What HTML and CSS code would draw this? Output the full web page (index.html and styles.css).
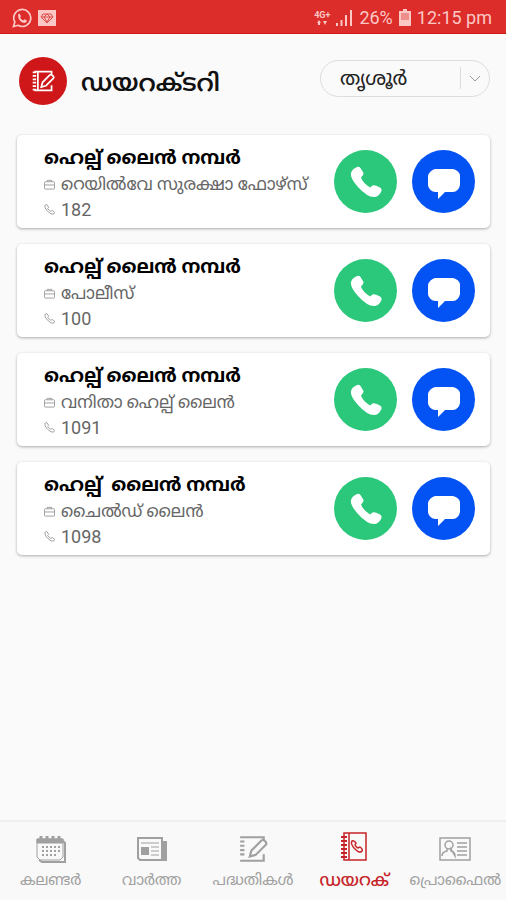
FILE: index.html
```html
<!DOCTYPE html>
<html lang="ml">
<head>
    <meta charset="UTF-8">
    <meta name="viewport" content="width=device-width, initial-scale=1.0">
    <title>ഡയറക്‌ടറി</title>
    <link rel="stylesheet" href="styles.css">
</head>
<body>
    <svg class="sprite" aria-hidden="true">
        <symbol id="phone" viewBox="0 0 32 32">
            <path d="M7 1Q9 0 10.500 2L13.500 7Q14 9 11 11.500Q12.500 16.500 20 21.500L22.500 19.500Q24.500 18.500 30 21.500Q32.500 23 31 26Q28.500 31 24 31Q17 31 8 21Q0 12 1 7Q2 3 7 1Z"/>
        </symbol>
        <symbol id="handset" viewBox="0 0 12 12">
            <path d="M1 1.500L3 .5L5 3.500L4 5Q5.500 7 7.500 8L9 7L11.500 9L10.500 11Q8 12 4 8Q0 4 1 1.500Z"/>
        </symbol>
        <symbol id="chat" viewBox="0 0 32 32">
            <path d="M7 1H25Q28 1.500 30 3.500T32 8V17Q31.500 20 29.500 22T25 24H17L10 31V24H7Q4 23.500 2 21.500T0 17V8Q.5 5.500 2.500 3.500T7 1Z"/>
        </symbol>
        <symbol id="case" viewBox="0 0 12 12">
            <path d="M3.500 3V1.500H8.500V3M1.500 3H10.500Q11.500 3 11.500 4V10Q11.500 11 10.500 11H1.500Q.5 11 .5 10V4Q.5 3 1.500 3ZM.5 6.500H11.500"/>
        </symbol>
        <symbol id="note" viewBox="0 0 28 28">
            <path d="M2 3H24V6M2 25H24V19"/>
            <path d="M2 7H6M2 11H6M2 15H6M2 19H6"/>
            <path d="M11 21L12.500 15.500L22 6Q23.500 5 25 6.500L26 7.500Q27 9 26 10L16.500 19.500Z"/>
        </symbol>
        <symbol id="note-bold" viewBox="0 0 28 28">
            <path d="M4 3H24V6M4 25H24V19M8 3V25"/>
            <path d="M2 4H6M2 8H6M2 12H6M2 16H6M2 20H6M2 24H6"/>
            <path d="M12 21L13.500 15.500L22 7Q23.500 6 25 7.500L26 8.500Q27 10 26 11L17.500 19.500Z"/>
        </symbol>
    </svg>

    <div class="status-bar">
        <div class="status-group">
            <svg class="status-app" viewBox="0 0 20 20">
                <path d="M1.500 18.500L2.800 14A8.500 8.500 0 1 1 6 17.300Z" fill="none" stroke="#fbc8c5" stroke-width="1.700"/>
                <path d="M6 6.500L7.500 5.500L9 8.200L8 9.500Q9.500 11.800 11.500 12.500L12.600 11.300L15 12.500Q14.500 15 12 15Q6 13.500 6 6.500Z" fill="#fbc8c5"/>
            </svg>
            <svg class="status-gem" viewBox="0 0 18 16">
                <path d="M0 0H18V16H0Z" fill="#fbc8c5"/>
                <path d="M5 4H13L15 7L9 13L3 7ZM3 7H15M6 7L9 12L12 7L9 4Z" fill="none" stroke="#dd4a48"/>
            </svg>
        </div>
        <div class="status-group">
            <span class="network"><span>4G+</span><svg viewBox="0 0 10 5"><path d="M0 3H4L2 0ZM6 1H10L8 5ZM1 3H3V5H1Z" fill="#fbc8c5"/></svg></span>
            <svg class="signal" viewBox="0 0 17 17">
                <path d="M1 14V17M5.500 11V17M10 6V17M15 1V17" stroke="#fbc8c5" stroke-width="2"/>
            </svg>
            <span>26%</span>
            <svg class="battery" viewBox="0 0 12 17">
                <path d="M4 0H8V2H12V17H0V2H4Z" fill="#fbc8c5"/>
                <path d="M2 4H10V11H2Z" fill="#ee8f8c"/>
            </svg>
            <span>12:15 pm</span>
        </div>
    </div>

    <header class="header">
        <span class="header-icon"><svg class="note"><use href="#note-bold"/></svg></span>
        <h1>ഡയറക്‌ടറി</h1>
        <div class="district">
            <select aria-label="ജില്ല">
                <option>തൃശൂർ</option>
            </select>
            <svg class="chevron" viewBox="0 0 12 7"><path d="M1 1L6 6L11 1"/></svg>
        </div>
    </header>

    <main class="list">
        <article class="card">
            <div class="info">
                <h2>ഹെല്പ് ലൈൻ നമ്പർ</h2>
                <p><svg><use href="#case"/></svg>റെയിൽവേ സുരക്ഷാ ഫോഴ്സ്</p>
                <p class="number"><svg><use href="#handset"/></svg>182</p>
            </div>
            <button class="action call" aria-label="Call"><svg><use href="#phone"/></svg></button>
            <button class="action message" aria-label="Message"><svg><use href="#chat"/></svg></button>
        </article>
        <article class="card">
            <div class="info">
                <h2>ഹെല്പ് ലൈൻ നമ്പർ</h2>
                <p><svg><use href="#case"/></svg>പോലീസ്</p>
                <p class="number"><svg><use href="#handset"/></svg>100</p>
            </div>
            <button class="action call" aria-label="Call"><svg><use href="#phone"/></svg></button>
            <button class="action message" aria-label="Message"><svg><use href="#chat"/></svg></button>
        </article>
        <article class="card">
            <div class="info">
                <h2>ഹെല്പ് ലൈൻ നമ്പർ</h2>
                <p><svg><use href="#case"/></svg>വനിതാ ഹെല്പ് ലൈൻ</p>
                <p class="number"><svg><use href="#handset"/></svg>1091</p>
            </div>
            <button class="action call" aria-label="Call"><svg><use href="#phone"/></svg></button>
            <button class="action message" aria-label="Message"><svg><use href="#chat"/></svg></button>
        </article>
        <article class="card">
            <div class="info">
                <h2>ഹെല്പ്&nbsp; ലൈൻ നമ്പർ</h2>
                <p><svg><use href="#case"/></svg>ചൈൽഡ് ലൈൻ</p>
                <p class="number"><svg><use href="#handset"/></svg>1098</p>
            </div>
            <button class="action call" aria-label="Call"><svg><use href="#phone"/></svg></button>
            <button class="action message" aria-label="Message"><svg><use href="#chat"/></svg></button>
        </article>
    </main>

    <nav class="tabs">
        <a href="#calendar">
            <svg viewBox="0 0 30 30">
                <path d="M1 5H27V23L24 26H4L1 23Z"/>
                <path d="M27 7L29 9V28H6L3 26" stroke-width="2"/>
                <path d="M1 5H27V9H1Z" fill="currentColor"/>
                <path d="M5 2V6M11 2V6M17 2V6M23 2V6" stroke-width="3"/>
                <path d="M6 13H24M6 17H24M6 21H20" stroke-width="2" stroke-dasharray="2 2"/>
            </svg>
            <span>കലണ്ടർ</span>
        </a>
        <a href="#news">
            <svg viewBox="0 0 30 30">
                <path d="M1 4H25V26H3L1 24Z" stroke-width="2"/>
                <path d="M26 7H30V27H25Z" fill="currentColor" stroke="none"/>
                <path d="M4 13H12V21H4Z" fill="currentColor" stroke="none"/>
                <path d="M4 9H22M14 13H22M14 17H22M14 21H22"/>
            </svg>
            <span>വാർത്ത</span>
        </a>
        <a href="#projects">
            <svg class="note"><use href="#note"/></svg>
            <span>പദ്ധതികൾ</span>
        </a>
        <a href="#directory" class="active">
            <svg viewBox="0 0 30 30">
                <path d="M5 1H27V28H5ZM10 1V28" stroke-width="1.500"/>
                <path d="M2 5H8M2 9H8M2 13H8M2 17H8M2 21H8M2 25H8" stroke-width="2"/>
                <path d="M13 9Q15 8 17 11L16 13Q17 15 19 16L21 15Q24 17 23 19Q21 22 16 17Q11 12 13 9Z" stroke-width="1.500"/>
            </svg>
            <span>ഡയറക്</span>
        </a>
        <a href="#profile">
            <svg class="wide" viewBox="0 0 32 30">
                <path d="M1 4H31V26H1ZM18 9H28M18 13H28M18 17H28M18 21H28" stroke-width="1.500"/>
                <circle cx="10" cy="11" r="4" stroke-width="1.500"/>
                <path d="M3 22Q3 18 8 17L8 15M12 15V17Q16 18 16 22Z" stroke-width="1.500"/>
            </svg>
            <span>പ്രൊഫൈൽ</span>
        </a>
    </nav>
</body>
</html>
```
FILE: styles.css
```css
* {
    box-sizing: border-box;
}
body {
    margin: 0;
    min-height: 100vh;
    display: flex;
    flex-direction: column;
    background: #fafafa;
    color: #111;
    font-family: Roboto, "Noto Sans Malayalam", "Noto Sans", sans-serif;
}
h1, h2, p {
    margin: 0;
}
.sprite {
    display: none;
}
.status-bar {
    display: flex;
    justify-content: space-between;
    align-items: center;
    height: 34px;
    padding: 2px 14px 0 12px;
    background: #dc2d2b;
    border-bottom: 1px solid #d01715;
    color: #fbc8c5;
    font-size: 18px;
}
.status-group {
    display: flex;
    align-items: center;
    gap: 6px;
}
.status-app {
    width: 20px;
    height: 20px;
}
.status-gem {
    width: 18px;
    height: 16px;
}
.network {
    display: flex;
    flex-direction: column;
    align-items: center;
    font-size: 9px;
    font-weight: bold;
    line-height: 9px;
}
.network svg {
    width: 10px;
    height: 5px;
}
.signal {
    width: 17px;
    height: 17px;
}
.battery {
    width: 12px;
    height: 17px;
}
.header {
    display: flex;
    align-items: center;
    gap: 14px;
    padding: 23px 16px 0 19px;
}
.header-icon {
    display: flex;
    align-items: center;
    justify-content: center;
    width: 48px;
    height: 48px;
    border-radius: 50%;
    background: #cf1719;
    color: #fff;
}
.header-icon .note {
    width: 24px;
    height: 24px;
}
.note {
    fill: none;
    stroke: currentColor;
    stroke-width: 2;
}
h1 {
    flex: 1;
    padding-top: 4px;
    font-size: 24px;
    line-height: 32px;
    font-weight: 600;
}
.district {
    position: relative;
    width: 170px;
    margin-bottom: 6px;
}
.district select {
    appearance: none;
    width: 100%;
    height: 37px;
    padding: 0 36px 0 19px;
    border: 1px solid #ddd;
    border-radius: 19px;
    background: linear-gradient(#ddd, #ddd) right 28px center / 1px 22px no-repeat #fafafa;
    color: #222;
    font: 20px/34px Roboto, "Noto Sans Malayalam", "Noto Sans", sans-serif;
}
.chevron {
    position: absolute;
    right: 9px;
    top: 15px;
    width: 12px;
    height: 7px;
    fill: none;
    stroke: #999;
    stroke-width: 1;
    pointer-events: none;
}
.list {
    flex: 1;
    display: flex;
    flex-direction: column;
    gap: 16px;
    padding: 30px 16px 16px 17px;
}
.card {
    display: flex;
    align-items: center;
    gap: 15px;
    padding: 6px 15px 6px 27px;
    border-radius: 5px;
    background: #fff;
    box-shadow: 0 1px 3px rgba(0,0,0,0.32);
}
.info {
    flex: 1;
    min-width: 0;
    padding-top: 4px;
}
h2 {
    font-size: 19px;
    line-height: 26px;
    font-weight: bold;
    color: #000;
    white-space: nowrap;
}
.info p {
    display: flex;
    align-items: center;
    gap: 6px;
    font-size: 17px;
    line-height: 26px;
    color: #666;
    white-space: nowrap;
}
.info .number {
    font-size: 18px;
    line-height: 25px;
}
.info svg {
    width: 11px;
    height: 11px;
    fill: none;
    stroke: #999;
    stroke-width: 1;
}
.action {
    display: flex;
    align-items: center;
    justify-content: center;
    width: 63px;
    height: 63px;
    padding: 0;
    border: none;
    border-radius: 50%;
    cursor: pointer;
}
.action svg {
    width: 32px;
    height: 32px;
    fill: #fff;
}
.call {
    background: #2bc77a;
}
.message {
    background: #0352f3;
}
.message svg {
    margin-top: 4px;
}
.tabs {
    display: grid;
    grid-template-columns: repeat(5, 1fr);
    height: 80px;
    padding-top: 12px;
    border-top: 2px solid #efefef;
    background: #f9f9f9;
}
.tabs a {
    display: flex;
    flex-direction: column;
    align-items: center;
    gap: 4px;
    color: #a0a0a0;
    text-decoration: none;
    font-size: 15px;
    line-height: 24px;
    white-space: nowrap;
}
.tabs svg {
    width: 30px;
    height: 30px;
    fill: none;
    stroke: currentColor;
}
.tabs .wide {
    width: 32px;
}
.tabs .active {
    color: #c62328;
    font-size: 17px;
    font-weight: 500;
}
.tabs .active svg {
    margin: -2px 0 2px;
}
```
